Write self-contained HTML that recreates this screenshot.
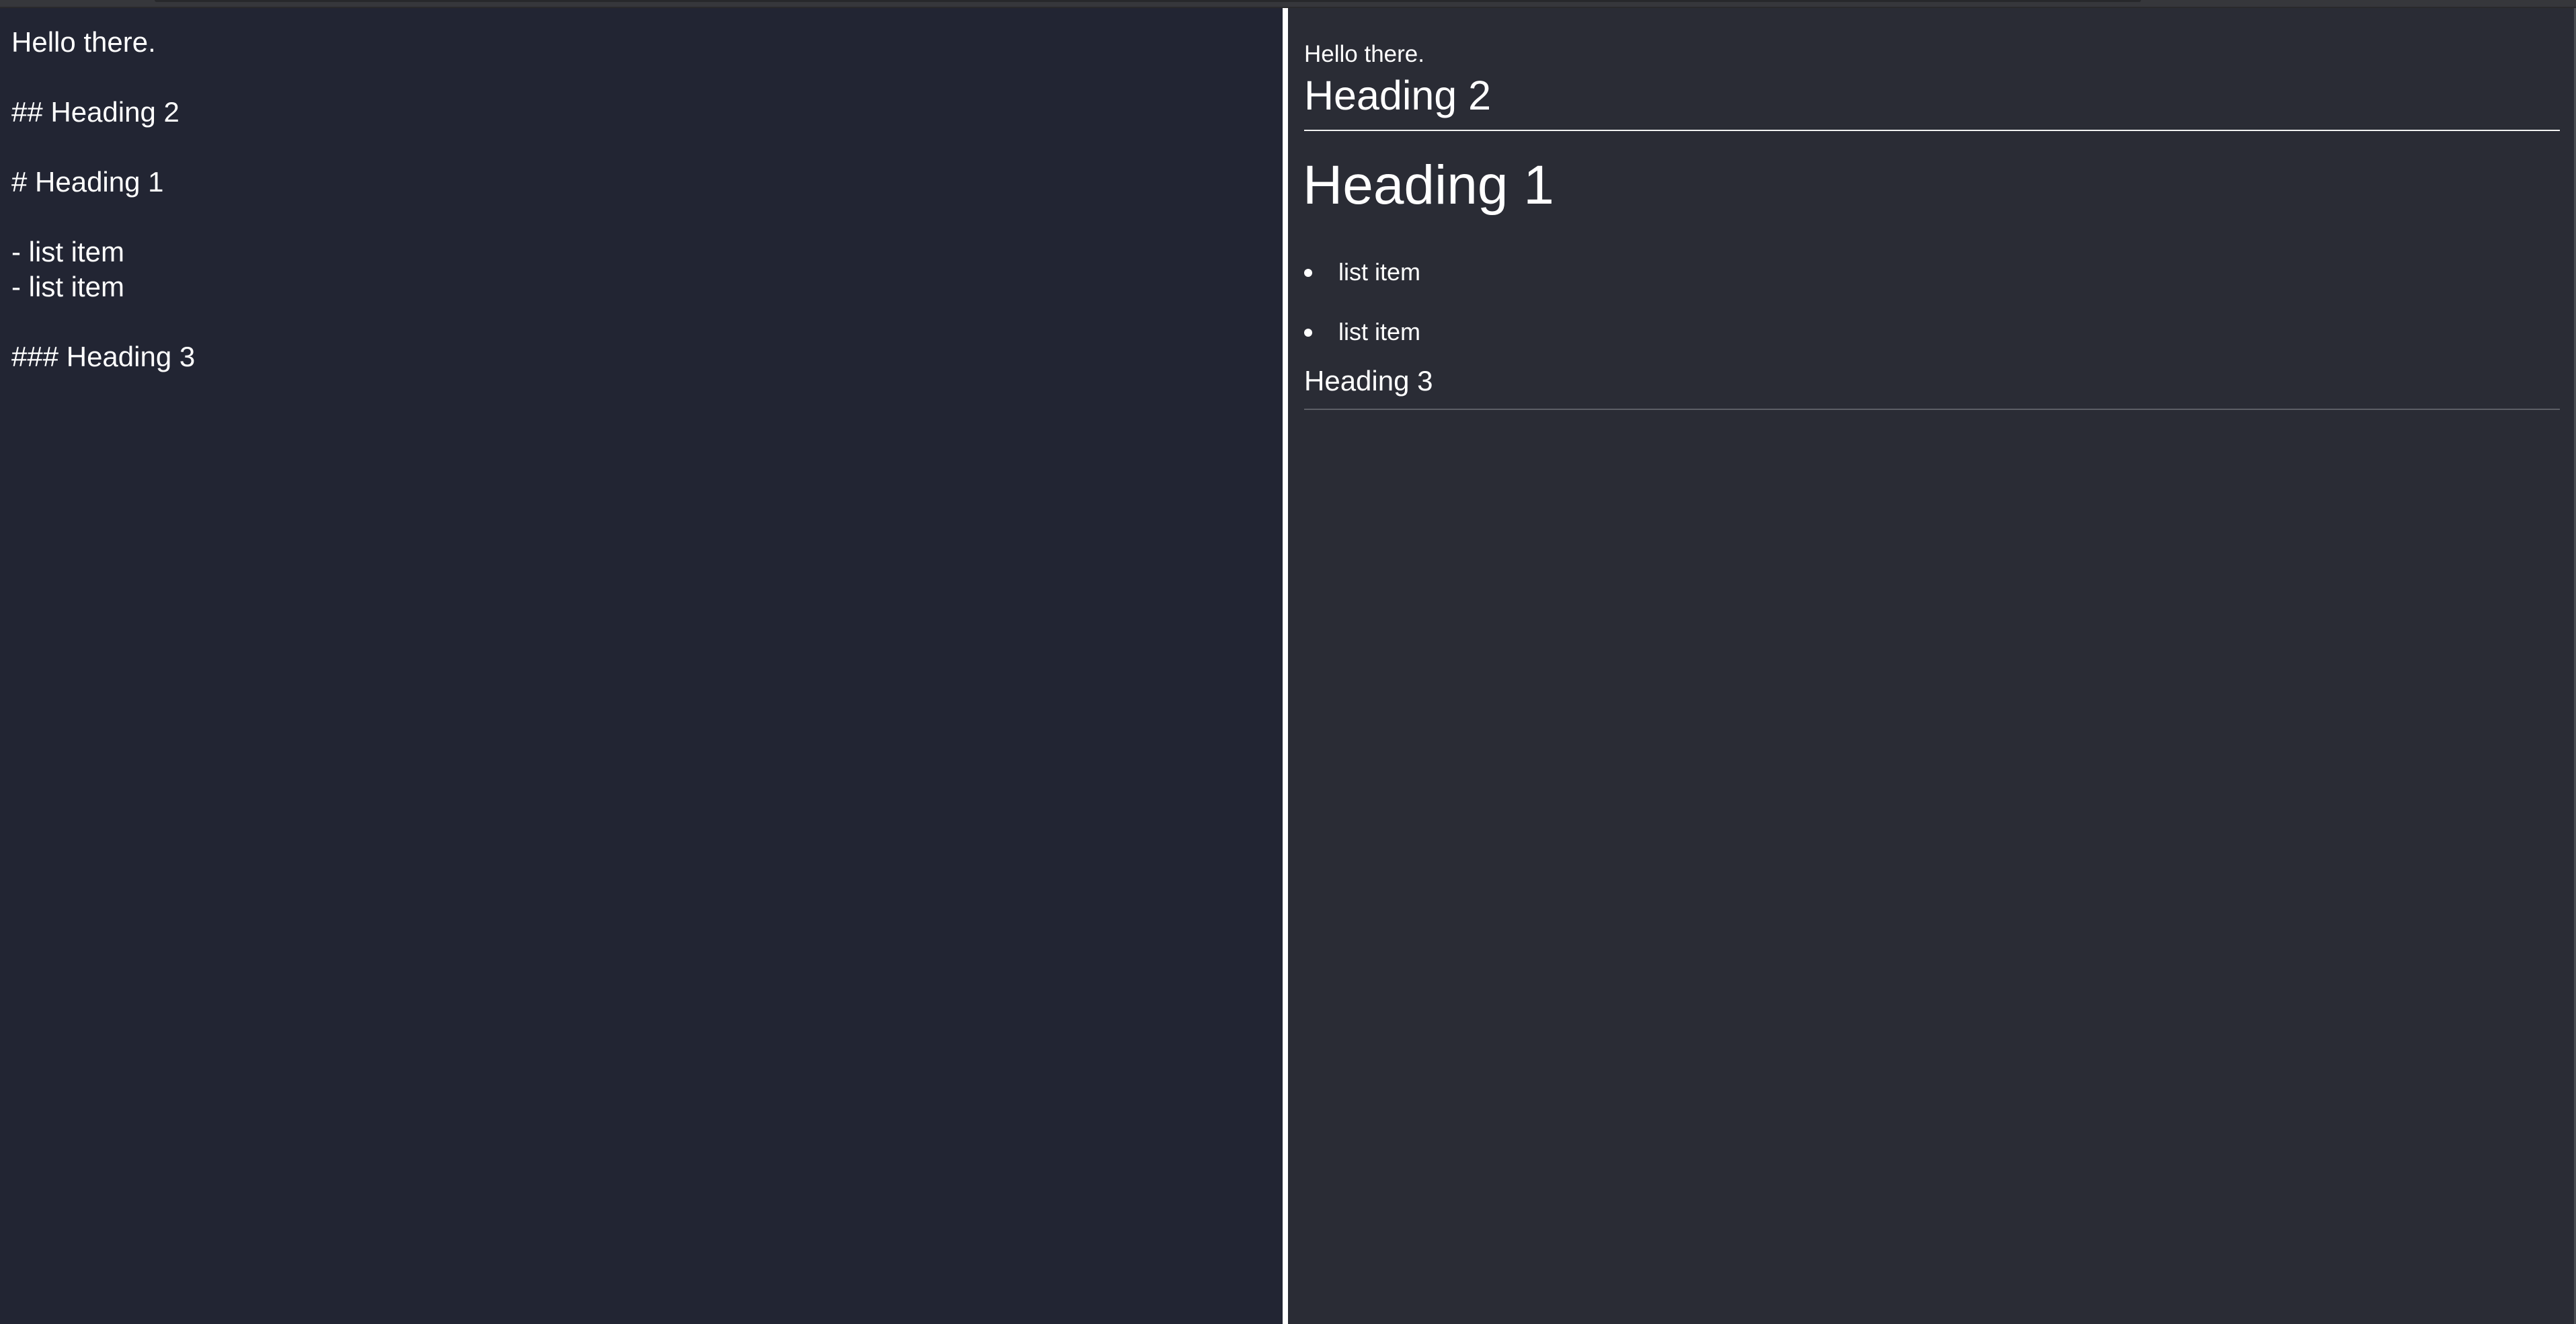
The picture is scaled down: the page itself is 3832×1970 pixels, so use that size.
<!DOCTYPE html>
<html><head><meta charset="utf-8"><style>
html,body{margin:0;padding:0;width:3832px;height:1970px;overflow:hidden;background:#2a2c35;font-family:"Liberation Sans",sans-serif;color:#fff}
.t{position:absolute;white-space:pre;line-height:1}
</style></head><body>
<div style="position:absolute;left:0;top:0;width:3832px;height:10px;background:#36373b"></div>
<div style="position:absolute;left:230px;top:0;width:2955px;height:3px;background:#27282b;border-radius:0 0 3px 3px"></div>
<div style="position:absolute;left:0;top:10px;width:3832px;height:2px;background:#2a2a2c"></div>
<div style="position:absolute;left:0;top:12px;width:1908px;height:1958px;background:#222533"></div>
<div style="position:absolute;left:1908px;top:12px;width:8px;height:1958px;background:#fff"></div>
<div style="position:absolute;left:1916px;top:12px;width:1913px;height:1958px;background:#2a2c35"></div>
<div style="position:absolute;left:3829px;top:12px;width:3px;height:1958px;background:#4a4d52"></div>

<div class="t" style="left:17px;top:42px;font-size:42px">Hello there.</div>
<div class="t" style="left:17px;top:146px;font-size:42px">## Heading 2</div>
<div class="t" style="left:17px;top:250px;font-size:42px"># Heading 1</div>
<div class="t" style="left:17px;top:354px;font-size:42px">- list item</div>
<div class="t" style="left:17px;top:406px;font-size:42px">- list item</div>
<div class="t" style="left:17px;top:510px;font-size:42px">### Heading 3</div>

<div class="t" style="left:1940px;top:63px;font-size:35px">Hello there.</div>
<div class="t" style="left:1940px;top:112px;font-size:61px">Heading 2</div>
<div style="position:absolute;left:1940px;top:193px;width:1868px;height:2px;background:#f2f2f2"></div>
<div class="t" style="left:1938px;top:235px;font-size:82px">Heading 1</div>
<div style="position:absolute;left:1940px;top:400px;width:12px;height:12px;border-radius:50%;background:#fff"></div>
<div class="t" style="left:1991px;top:387px;font-size:36px">list item</div>
<div style="position:absolute;left:1940px;top:489px;width:12px;height:12px;border-radius:50%;background:#fff"></div>
<div class="t" style="left:1991px;top:476px;font-size:36px">list item</div>
<div class="t" style="left:1940px;top:546px;font-size:42px">Heading 3</div>
<div style="position:absolute;left:1940px;top:608px;width:1868px;height:2px;background:#5d5f66"></div>
</body></html>
